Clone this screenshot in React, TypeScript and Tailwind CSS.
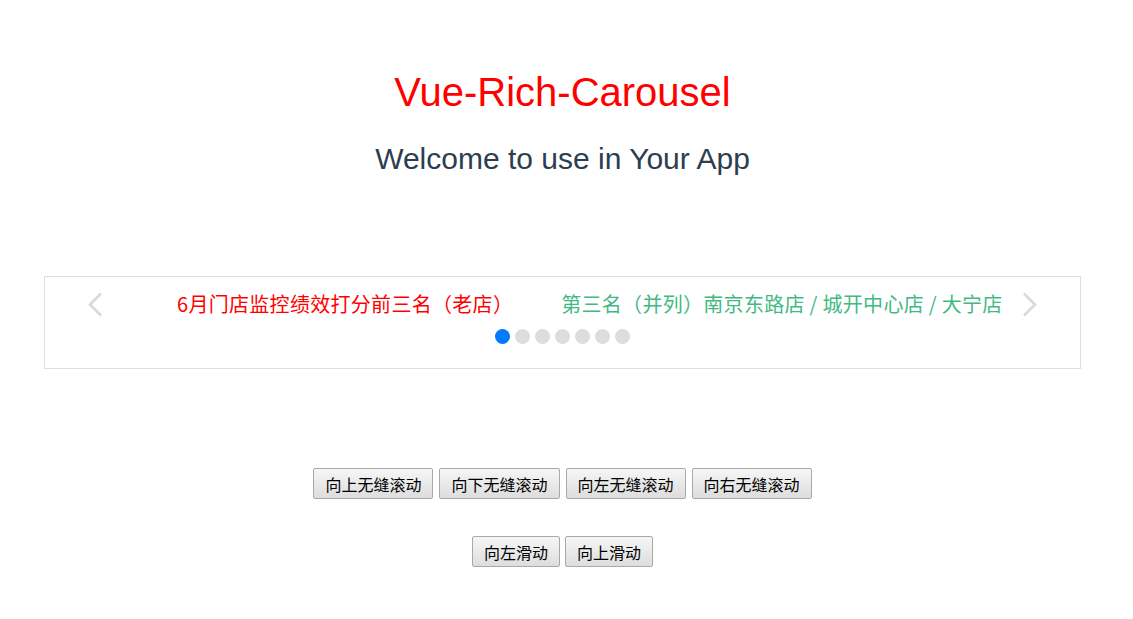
import React from "react";

const cjk = { fontFamily: '"Microsoft YaHei", "Noto Sans CJK SC", sans-serif' };

// Thin chevron used by the carousel arrows
const Chevron = ({ dir }: { dir: "left" | "right" }) => (
  <svg width="16" height="25" viewBox="0 0 16 25" fill="none">
    <path
      d={dir === "left" ? "M14 1.5 L3 12.5 L14 23.5" : "M2 1.5 L13 12.5 L2 23.5"}
      stroke="#d9d9d9"
      strokeWidth="2.6"
    />
  </svg>
);

const Btn = ({ children }: { children: React.ReactNode }) => (
  <button
    className="h-[31px] px-[11px] border border-[#a9a9a9] rounded-[2px] bg-gradient-to-b from-[#f6f6f6] to-[#dddddd] text-[16px] text-black leading-none"
    style={cjk}
  >
    {children}
  </button>
);

function App() {
  const dots = [0, 1, 2, 3, 4, 5, 6];

  return (
    <div className="w-[1125px] bg-white pt-[72px] pb-[50px] text-center" style={{ fontFamily: '"Liberation Sans", Arial, sans-serif' }}>
      <h1 className="text-[40px] leading-none text-[#ff0000]">Vue-Rich-Carousel</h1>
      <h2 className="mt-[32px] text-[30px] leading-none text-[#2c3e50]">Welcome to use in Your App</h2>

      {/* carousel */}
      <div className="mx-[44px] mt-[102px] h-[93px] border border-[#dddddd]">
        <div className="flex items-center h-[24px] mt-[15px]">
          <div className="ml-[42px]">
            <Chevron dir="left" />
          </div>
          <span className="ml-[74px] text-[20px] leading-[24px] tracking-[0.3px] text-[#ff0000] whitespace-nowrap" style={cjk}>
            6月门店监控绩效打分前三名（老店）
          </span>
          <span className="ml-[48px] text-[20px] leading-[24px] tracking-[0.3px] text-[#42b983] whitespace-nowrap" style={cjk}>
            第三名（并列）南京东路店 / 城开中心店 / 大宁店
          </span>
          <div className="ml-auto mr-[42px]">
            <Chevron dir="right" />
          </div>
        </div>
        <div className="flex justify-center gap-[5px] mt-[13px]">
          {dots.map((d) => (
            <span
              key={d}
              className={d === 0 ? "w-[15px] h-[15px] rounded-full bg-[#007aff]" : "w-[15px] h-[15px] rounded-full bg-[#dddddd]"}
            />
          ))}
        </div>
      </div>

      <div className="flex justify-center gap-[6px] mt-[99px]">
        <Btn>向上无缝滚动</Btn>
        <Btn>向下无缝滚动</Btn>
        <Btn>向左无缝滚动</Btn>
        <Btn>向右无缝滚动</Btn>
      </div>
      <div className="flex justify-center gap-[5px] mt-[37px]">
        <Btn>向左滑动</Btn>
        <Btn>向上滑动</Btn>
      </div>
    </div>
  );
}

export default App;
